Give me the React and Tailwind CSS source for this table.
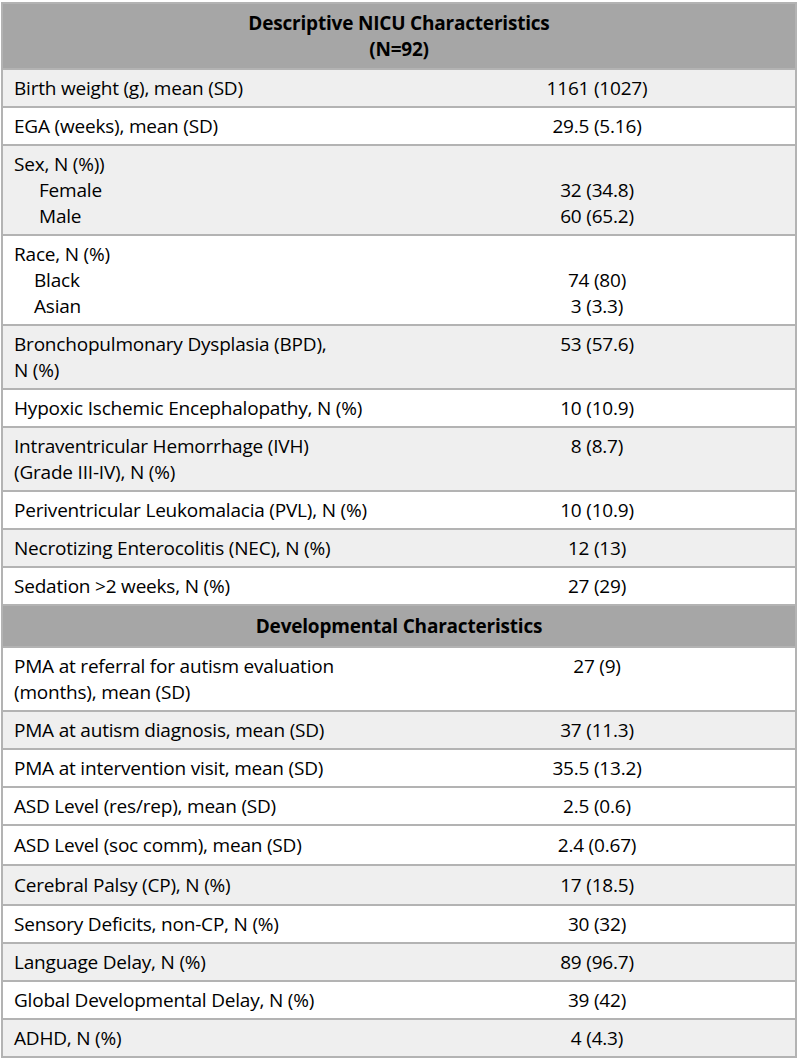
const rows = [
  { type: "head", lines: ["Descriptive NICU Characteristics", "(N=92)"] },
  { label: ["Birth weight (g), mean (SD)"], value: ["1161 (1027)"], shade: true },
  { label: ["EGA (weeks), mean (SD)"], value: ["29.5 (5.16)"] },
  {
    label: ["Sex, N (%))", "Female", "Male"],
    value: ["", "32 (34.8)", "60 (65.2)"],
    indent: "pl-[25px]",
    shade: true,
  },
  {
    label: ["Race, N (%)", "Black", "Asian"],
    value: ["", "74 (80)", "3 (3.3)"],
    indent: "pl-[20px]",
  },
  { label: ["Bronchopulmonary Dysplasia (BPD),", "N (%)"], value: ["53 (57.6)", ""], shade: true },
  { label: ["Hypoxic Ischemic Encephalopathy, N (%)"], value: ["10 (10.9)"] },
  { label: ["Intraventricular Hemorrhage (IVH)", "(Grade III-IV), N (%)"], value: ["8 (8.7)", ""], shade: true },
  { label: ["Periventricular Leukomalacia (PVL), N (%)"], value: ["10 (10.9)"] },
  { label: ["Necrotizing Enterocolitis (NEC), N (%)"], value: ["12 (13)"], shade: true },
  { label: ["Sedation >2 weeks, N (%)"], value: ["27 (29)"] },
  { type: "head", lines: ["Developmental Characteristics"], tall: true },
  { label: ["PMA at referral for autism evaluation", "(months), mean (SD)"], value: ["27 (9)", ""] },
  { label: ["PMA at autism diagnosis, mean (SD)"], value: ["37 (11.3)"], shade: true },
  { label: ["PMA at intervention visit, mean (SD)"], value: ["35.5 (13.2)"] },
  { label: ["ASD Level (res/rep), mean (SD)"], value: ["2.5 (0.6)"] },
  { label: ["ASD Level (soc comm), mean (SD)"], value: ["2.4 (0.67)"], tall: true },
  { label: ["Cerebral Palsy (CP), N (%)"], value: ["17 (18.5)"], shade: true, tall: true },
  { label: ["Sensory Deficits, non-CP, N (%)"], value: ["30 (32)"] },
  { label: ["Language Delay, N (%)"], value: ["89 (96.7)"], shade: true },
  { label: ["Global Developmental Delay, N (%)"], value: ["39 (42)"] },
  { label: ["ADHD, N (%)"], value: ["4 (4.3)"], shade: true },
];

function Row({ row }) {
  if (row.type === "head") {
    return (
      <div
        className={`border-b-2 border-[#b3b3b3] bg-[#a6a6a6] text-center font-bold ${
          row.tall ? "py-[7px]" : "py-[6px]"
        }`}
      >
        {row.lines.map((l) => (
          <div key={l} className="h-[26px] leading-[26px]">
            {l}
          </div>
        ))}
      </div>
    );
  }

  return (
    <div
      className={`grid grid-cols-2 border-b-2 border-[#b3b3b3] ${
        row.shade ? "bg-[#efefef]" : "bg-white"
      } ${row.tall ? "py-[6px]" : "py-[5px]"}`}
    >
      <div className="pl-[11px]">
        {row.label.map((l, i) => (
          <div
            key={i}
            className={`h-[26px] leading-[26px] whitespace-nowrap ${i > 0 && row.indent ? row.indent : ""}`}
          >
            {l}
          </div>
        ))}
      </div>
      <div className="text-center">
        {row.value.map((v, i) => (
          <div key={i} className="h-[26px] leading-[26px]">
            {v}
          </div>
        ))}
      </div>
    </div>
  );
}

export default function App() {
  return (
    <div className="min-h-screen bg-white pt-[2px] font-['Open_Sans',sans-serif] text-[19px] tracking-[-0.2px] text-black">
      <div className="mx-[1px] border-x-2 border-t-2 border-[#b3b3b3]">
        {rows.map((row, i) => (
          <Row key={i} row={row} />
        ))}
      </div>
    </div>
  );
}
